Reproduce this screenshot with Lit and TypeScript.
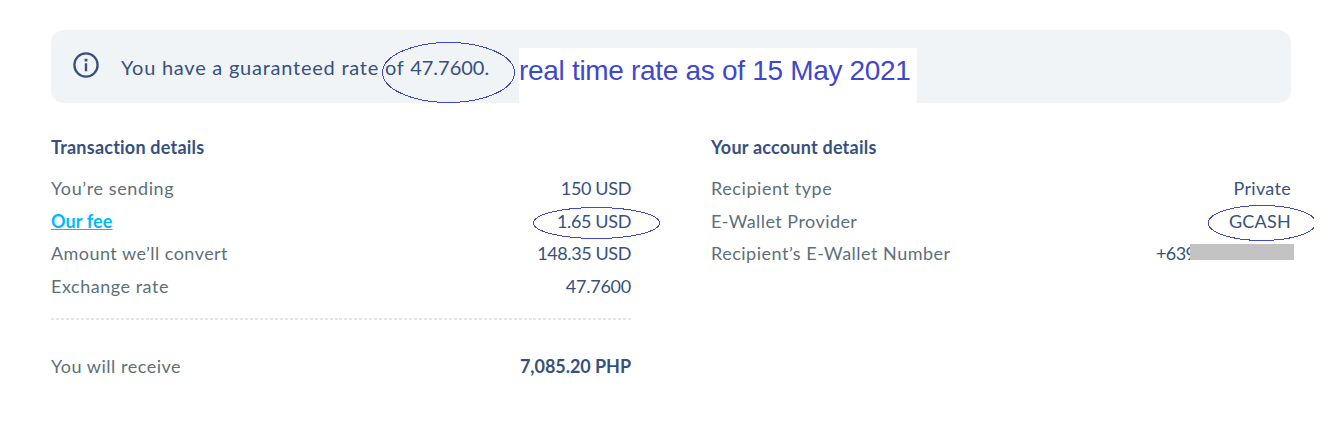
import { LitElement, html, css, nothing } from "lit";
import { customElement, property } from "lit/decorators.js";
import { styleMap } from "lit/directives/style-map.js";
import { classMap } from "lit/directives/class-map.js";

interface Label {
  text: string;
  track: number;
  kind?: "link" | "strong";
}

interface Detail {
  label: Label;
  value: Label;
  masked?: boolean;
}

const transaction: Detail[] = [
  { label: { text: "You’re sending", track: 0.6 }, value: { text: "150 USD", track: -0.35 } },
  { label: { text: "Our fee", track: 0.12, kind: "link" }, value: { text: "1.65 USD", track: -0.35 } },
  { label: { text: "Amount we’ll convert", track: 0.45 }, value: { text: "148.35 USD", track: -0.4 } },
  { label: { text: "Exchange rate", track: 0.53 }, value: { text: "47.7600", track: -0.25 } },
];

const total: Detail = {
  label: { text: "You will receive", track: 0.52 },
  value: { text: "7,085.20 PHP", track: -0.05, kind: "strong" },
};

const account: Detail[] = [
  { label: { text: "Recipient type", track: 0.57 }, value: { text: "Private", track: 0.3 } },
  { label: { text: "E-Wallet Provider", track: 0.44 }, value: { text: "GCASH", track: 0.25 } },
  { label: { text: "Recipient’s E-Wallet Number", track: 0.5 }, value: { text: "+639", track: -0.6 }, masked: true },
];

const text = ({ text, track, kind }: Label) => html`<span
  class=${classMap({ link: kind === "link", strong: kind === "strong" })}
  style=${styleMap({ letterSpacing: `${track}px` })}>${text}</span>`;

@customElement("detail-row")
export class DetailRow extends LitElement {
  static styles = css`
    :host {
      display: flex;
      justify-content: space-between;
      height: 32px;
      line-height: 32px;
      color: #5d7079;
    }
    .value {
      color: #37517e;
    }
    .masked {
      position: relative;
      width: 135px;
    }
    .mask {
      position: absolute;
      left: 34px;
      right: -3px;
      top: 7px;
      height: 16px;
      background: #c3c3c3;
    }
    .strong {
      font-weight: 700;
    }
    .link {
      color: #00b9ff;
      font-weight: 700;
      text-decoration: underline 1px;
      text-underline-offset: 1px;
      text-decoration-skip-ink: none;
    }
  `;

  @property({ attribute: false }) detail!: Detail;

  render() {
    const { label, value, masked } = this.detail;
    return html`
      ${text(label)}
      <div class=${classMap({ value: true, masked: !!masked })}>
        ${text(value)}${masked ? html`<span class="mask"></span>` : nothing}
      </div>
    `;
  }
}

@customElement("app-root")
export class AppRoot extends LitElement {
  static styles = css`
    :host {
      display: block;
      position: relative;
      box-sizing: border-box;
      height: 431px;
      padding: 30px 39px 0 51px;
      overflow: hidden;
      background: #fff;
      font: 400 18px Lato, sans-serif;
    }
    .banner {
      display: flex;
      align-items: center;
      box-sizing: border-box;
      height: 73px;
      padding-left: 21px;
      border-radius: 13px;
      background: #f0f4f7;
      color: #37517e;
    }
    .info {
      flex: none;
      width: 28px;
      height: 28px;
      margin-bottom: 3px;
    }
    .rate {
      margin-left: 21px;
      font-size: 20px;
      line-height: 24px;
      letter-spacing: 0.76px;
      white-space: nowrap;
    }
    .amount {
      letter-spacing: 0;
    }
    .note {
      position: absolute;
      left: 519px;
      top: 48px;
      width: 398px;
      height: 55px;
      background: #fff;
      color: #3f48cc;
      font: 28px/46px "Liberation Sans", Arial, sans-serif;
      letter-spacing: -0.31px;
      white-space: nowrap;
    }
    .columns {
      display: grid;
      grid-template-columns: 580px 580px;
      column-gap: 80px;
      padding-top: 27px;
    }
    .title {
      margin: 0 0 8px;
      height: 34px;
      font-size: 18px;
      font-weight: 700;
      line-height: 34px;
      letter-spacing: 0.22px;
      color: #37517e;
    }
    .rows {
      display: grid;
      grid-template-rows: 33px 32px 33px 33px;
    }
    .rule {
      height: 2px;
      margin: 15px 0 30px;
      background: repeating-linear-gradient(90deg, #e2e6e8 0 3px, transparent 3px 4.974px);
    }
    .marks {
      position: absolute;
      left: 0;
      top: 0;
      width: 1314px;
      height: 431px;
      fill: none;
      stroke: #3f48cc;
      shape-rendering: crispEdges;
    }
  `;

  render() {
    return html`
      <div class="banner">
        <svg class="info" viewBox="0 0 28 28">
          <circle cx="14" cy="14" r="11.6" fill="none" stroke="#37517e" stroke-width="2.3" />
          <path d="M12.6 7.7h2.8v2.7h-2.8zM12.8 12.2h2.4v8.1h-2.4z" fill="#37517e" />
        </svg>
        <div class="rate">You have a guaranteed rate of <span class="amount">47.7600.</span></div>
      </div>
      <div class="columns">
        <section>
          <h2 class="title">Transaction details</h2>
          <div class="rows">${transaction.map((d) => html`<detail-row .detail=${d}></detail-row>`)}</div>
          <div class="rule"></div>
          <detail-row .detail=${total}></detail-row>
        </section>
        <section>
          <h2 class="title">Your account details</h2>
          <div class="rows">${account.map((d) => html`<detail-row .detail=${d}></detail-row>`)}</div>
        </section>
      </div>
      <div class="note">real time rate as of 15 May 2021</div>
      <svg class="marks" viewBox="0 0 1314 431">
        <ellipse cx="448.5" cy="72.5" rx="66" ry="30" />
        <ellipse cx="596.5" cy="223" rx="63" ry="15.5" />
        <ellipse cx="1262" cy="223" rx="53.7" ry="17.5" />
      </svg>
    `;
  }
}
